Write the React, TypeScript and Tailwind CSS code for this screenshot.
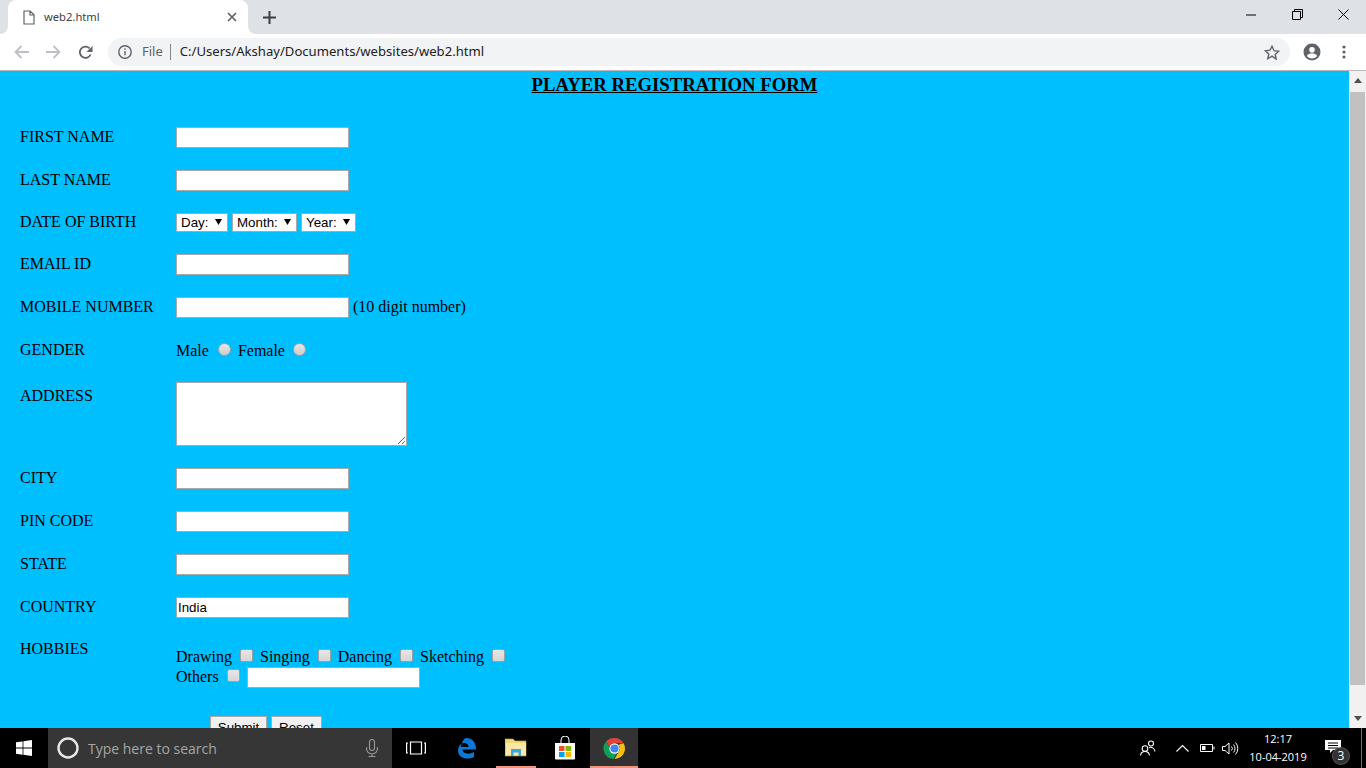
import type { ReactNode } from "react";

const fieldClass = "block h-[21px] w-[173px] border border-[#a9a9a9] bg-white px-px font-['Liberation_Sans',sans-serif] text-[13.33px] text-black outline-none";
const checkClass = "h-[13px] w-[13px] shrink-0 appearance-none rounded-[2px] border border-[#a0a0a0] bg-gradient-to-b from-[#e6e6e6] to-[#d6d6d6]";
const radioClass = "h-[13px] w-[13px] shrink-0 appearance-none rounded-full border border-[#a6a6a6] bg-gradient-to-b from-[#e8e8e8] to-[#cccccc]";
const selectClass = "block h-[19px] appearance-none border border-[#a9a9a9] bg-white pl-1 font-['Liberation_Sans',sans-serif] text-[13.33px] leading-[15px] text-black outline-none";

function Row({ label, height, labelClass = "pt-px", children }: { label: string; height: string; labelClass?: string; children: ReactNode }) {
  return (
    <div className={`flex items-start ${height}`}>
      <label className={`w-[156px] shrink-0 leading-[18px] ${labelClass}`}>{label}</label>
      {children}
    </div>
  );
}

function Arrow() {
  return (
    <svg className="pointer-events-none absolute right-[6px] top-[6px]" width="7" height="6" viewBox="0 0 7 6">
      <path d="M0 0h7L3.500 6z" fill="#000" />
    </svg>
  );
}

function TabStrip() {
  return (
    <div className="flex h-[34px] items-end bg-[#dee1e6] pl-2">
      <div className="relative flex h-[34px] w-[240px] items-center rounded-t-lg bg-white pl-[15px] pr-[11px]">
        <span className="absolute -left-2 bottom-0 h-2 w-2 bg-white"><span className="block h-2 w-2 rounded-br-lg bg-[#dee1e6]" /></span>
        <span className="absolute -right-2 bottom-0 h-2 w-2 bg-white"><span className="block h-2 w-2 rounded-bl-lg bg-[#dee1e6]" /></span>
        <svg width="12" height="15" viewBox="0 0 12 15" fill="none" stroke="#5f6368" strokeWidth="1.2">
          <path d="M1 1h6.2L11 4.8V14H1zM7 1v4h4" />
        </svg>
        <span className="ml-[9px] flex-1 text-[11.2px] text-[#3c4043]">web2.html</span>
        <svg width="10" height="10" viewBox="0 0 10 10" stroke="#5f6368" strokeWidth="1.7">
          <path d="M1 1l8 8M9 1l-8 8" />
        </svg>
      </div>
      <svg className="mb-[10px] ml-[15px]" width="13" height="13" viewBox="0 0 13 13" stroke="#3c4043" strokeWidth="2">
        <path d="M6.5 0v13M0 6.5h13" />
      </svg>
      <div className="ml-auto flex h-[34px] items-start pt-[9px] text-black">
        <div className="flex h-[11px] w-[46px] items-center justify-center">
          <svg width="10" height="2" viewBox="0 0 10 2"><path d="M0 1h10" stroke="#000" /></svg>
        </div>
        <div className="flex w-[46px] justify-center">
          <svg width="11" height="11" viewBox="0 0 11 11" fill="none" stroke="#000">
            <path d="M.5 2.500h8v8h-8zM2.500 2.500v-2h8v8h-2" />
          </svg>
        </div>
        <div className="flex w-[46px] justify-center">
          <svg width="11" height="11" viewBox="0 0 11 11" stroke="#000"><path d="M.5.5l10 10M10.500.5l-10 10" /></svg>
        </div>
      </div>
    </div>
  );
}

function Toolbar() {
  return (
    <div className="flex h-[37px] items-start border-b border-[#b7b9bc] bg-white pt-1">
      <div className="flex h-7 w-[108px] items-center pl-[14px]">
        <svg width="15" height="14" viewBox="0 0 15 14" fill="none" stroke="#bdc1c6" strokeWidth="1.8">
          <path d="M15 7H2M7.500 1L1.500 7l6 6" />
        </svg>
        <svg className="ml-[17px]" width="15" height="14" viewBox="0 0 15 14" fill="none" stroke="#bdc1c6" strokeWidth="1.8">
          <path d="M0 7h13M7.500 1l6 6-6 6" />
        </svg>
        <svg className="ml-[17px]" width="15" height="15" viewBox="0 0 15 15" fill="none">
          <path d="M12.600 9.500A5.600 5.600 0 1 1 11.500 3.400" stroke="#5f6368" strokeWidth="1.8" />
          <path d="M14.500 1v6h-6z" fill="#5f6368" />
        </svg>
      </div>
      <div className="flex h-7 w-[1182px] items-center rounded-full bg-[#f1f3f4] pl-[10px] pr-[10px]">
        <svg width="14" height="14" viewBox="0 0 14 14" fill="none" stroke="#5f6368" strokeWidth="1.4">
          <circle cx="7" cy="7" r="6.200" />
          <path d="M7 6v4.200M7 3.200v1.600" />
        </svg>
        <span className="ml-[10px] text-[13px] text-[#5f6368]">File</span>
        <span className="ml-[7px] h-4 w-px bg-[#80868b]" />
        <span className="ml-[9px] flex-1 text-[13.1px] text-[#202124]">C:/Users/Akshay/Documents/websites/web2.html</span>
        <svg width="16" height="15" viewBox="0 0 16 15" fill="none" stroke="#5f6368" strokeWidth="1.4">
          <path d="M8 1.300l2 4.400 4.700.5-3.500 3.200 1 4.700L8 11.200 3.800 13.600l1-4.700L1.300 5.700l4.700-.5z" />
        </svg>
      </div>
      <div className="flex h-7 items-center">
        <svg className="ml-[13px]" width="18" height="18" viewBox="0 0 18 18">
          <circle cx="9" cy="9" r="8.500" fill="#5f6368" />
          <circle cx="9" cy="6.800" r="2.800" fill="#fff" />
          <path d="M3.800 13c1-2 3.200-2.800 5.200-2.800s4.200.8 5.200 2.800c-1.200 1.500-3.100 2.400-5.200 2.400S5 14.500 3.800 13z" fill="#fff" />
        </svg>
        <svg className="ml-[21px]" width="4" height="14" viewBox="0 0 4 14" fill="#5f6368">
          <circle cx="2" cy="2" r="1.600" />
          <circle cx="2" cy="7" r="1.600" />
          <circle cx="2" cy="12" r="1.600" />
        </svg>
      </div>
    </div>
  );
}

function Form() {
  return (
    <main className="min-w-0 flex-1 overflow-hidden bg-[#00bfff] pl-5 font-['Liberation_Serif',serif] text-[16px] text-black">
      <h3 className="mt-[3px] h-[22px] pr-5 text-center text-[18.72px] font-bold leading-[22px] underline">PLAYER REGISTRATION FORM</h3>
      <form className="mt-[31px]">
        <Row label="FIRST NAME" height="h-[43px]"><input className={fieldClass} /></Row>
        <Row label="LAST NAME" height="h-[43px]"><input className={fieldClass} /></Row>
        <Row label="DATE OF BIRTH" height="h-[41px]" labelClass="pt-0">
          <div className="flex gap-1">
            <div className="relative">
              <select className={`${selectClass} w-[52px]`}><option>Day:</option></select>
              <Arrow />
            </div>
            <div className="relative">
              <select className={`${selectClass} w-[65px]`}><option>Month:</option></select>
              <Arrow />
            </div>
            <div className="relative">
              <select className={`${selectClass} w-[55px]`}><option>Year:</option></select>
              <Arrow />
            </div>
          </div>
        </Row>
        <Row label="EMAIL ID" height="h-[43px]"><input className={fieldClass} /></Row>
        <Row label="MOBILE NUMBER" height="h-[43px]">
          <input className={fieldClass} />
          <span className="ml-1 pt-px leading-[18px]">(10 digit number)</span>
        </Row>
        <Row label="GENDER" height="h-[42px]">
          <div className="flex items-start pt-[2px] leading-[18px]">
            <span>Male</span>
            <input type="radio" name="gender" className={`${radioClass} ml-[9px] mt-px`} />
            <span className="ml-[7px]">Female</span>
            <input type="radio" name="gender" className={`${radioClass} ml-[8px] mt-px`} />
          </div>
        </Row>
        <Row label="ADDRESS" height="h-[86px]" labelClass="pt-[5px]">
          <textarea className="block h-[64px] w-[231px] resize-y border border-[#a9a9a9] bg-white outline-none" />
        </Row>
        <Row label="CITY" height="h-[43px]"><input className={fieldClass} /></Row>
        <Row label="PIN CODE" height="h-[43px]"><input className={fieldClass} /></Row>
        <Row label="STATE" height="h-[43px]"><input className={fieldClass} /></Row>
        <Row label="COUNTRY" height="h-[42px]"><input className={fieldClass} defaultValue="India" /></Row>
        <Row label="HOBBIES" height="h-[77px]">
          <div className="pt-[8px] leading-[20px]">
            <div className="flex h-5 items-center">
              <span>Drawing</span>
              <input type="checkbox" className={`${checkClass} -mt-[3px] ml-[8px]`} />
              <span className="ml-[7px]">Singing</span>
              <input type="checkbox" className={`${checkClass} -mt-[3px] ml-[8px]`} />
              <span className="ml-[7px]">Dancing</span>
              <input type="checkbox" className={`${checkClass} -mt-[3px] ml-[8px]`} />
              <span className="ml-[7px]">Sketching</span>
              <input type="checkbox" className={`${checkClass} -mt-[3px] ml-[8px]`} />
            </div>
            <div className="flex h-5 items-center">
              <span>Others</span>
              <input type="checkbox" className={`${checkClass} -mt-[3px] ml-[8px]`} />
              <input className={`${fieldClass} ml-[7px]`} />
            </div>
          </div>
        </Row>
        <div className="flex gap-1 pl-[190px]">
          <button type="button" className="h-[24px] w-[57px] border border-[#a9a9a9] bg-[#f0f0f0] font-['Liberation_Sans',sans-serif] text-[13.33px]">Submit</button>
          <button type="button" className="h-[24px] w-[51px] border border-[#a9a9a9] bg-[#f0f0f0] font-['Liberation_Sans',sans-serif] text-[13.33px]">Reset</button>
        </div>
      </form>
    </main>
  );
}

function Scrollbar() {
  return (
    <div className="flex w-[17px] shrink-0 flex-col items-center bg-[#f1f1f1]">
      <svg className="mt-[7px]" width="8" height="5" viewBox="0 0 8 5"><path d="M4 0l4 5H0z" fill="#505050" /></svg>
      <div className="mt-[9px] h-[593px] w-[15px] bg-[#c1c1c1]" />
      <svg className="mt-[31px]" width="8" height="5" viewBox="0 0 8 5"><path d="M0 0h8L4 5z" fill="#505050" /></svg>
    </div>
  );
}

function Taskbar() {
  return (
    <footer className="flex h-10 shrink-0 items-center bg-black font-['Open_Sans',sans-serif] text-white">
      <div className="flex h-10 w-12 items-center justify-center">
        <svg width="16" height="16" viewBox="0 0 16 16" fill="#fff">
          <path d="M0 2.300l6.600-.9v6.200H0zM7.400 1.300L16 0v7.600H7.400zM0 8.400h6.600v6.300L0 13.800zM7.400 8.400H16V16l-8.600-1.200z" />
        </svg>
      </div>
      <div className="flex h-10 w-[344px] items-center bg-[#363636] pl-[9px]">
        <svg width="22" height="22" viewBox="0 0 22 22" fill="none"><circle cx="11" cy="11" r="9.500" stroke="#e8e8e8" strokeWidth="2.400" /></svg>
        <span className="ml-[9px] flex-1 text-[14px] text-[#a6a6a6]">Type here to search</span>
        <svg className="mr-[14px]" width="12" height="18" viewBox="0 0 12 18" fill="none" stroke="#9a9a9a" strokeWidth="1.100">
          <rect x="3.500" y="0.500" width="5" height="11" rx="2.500" />
          <path d="M.5 8v1.500a5.500 5.500 0 0 0 11 0V8M6 15v2.500M2.500 17.500h7" />
        </svg>
      </div>
      <div className="flex w-[48px] justify-center">
        <svg width="20" height="14" viewBox="0 0 20 14" fill="none" stroke="#fff" strokeWidth="1.200">
          <path d="M4.500 1h11v12h-11zM2 2H.6v10H2M18 2h1.400v10H18" />
        </svg>
      </div>
      <div className="flex w-[52px] justify-center">
        <svg width="20" height="21" viewBox="0 0 20 21">
          <path d="M10.500 0C16 0 20 4 20 11.500H6.500c.2 3.800 6 5.800 11.500 2.500v5c-6.500 3.400-16 1.200-16-6.500 0-3.500 1.500-5.500 4-7C5.200 7 5 8 4.800 9h7.700c0-3.500-3.300-5-6.500-3.500C6.800 2.500 8 0 10.500 0z" fill="#0a78d7" />
        </svg>
      </div>
      <div className="relative flex h-10 w-[48px] justify-center pt-[10px]">
        <svg width="22" height="19" viewBox="0 0 22 19">
          <path d="M0 1h8l2 2h11v15H0z" fill="#f6d776" stroke="#c9a74d" strokeWidth="0.600" />
          <path d="M1 5h20v12H1z" fill="#fbe8a6" />
          <path d="M6 18v-7h10v7h-2.500v-3.500h-5V18z" fill="#3ba7d8" />
        </svg>
        <span className="absolute bottom-0 left-[4px] h-[2px] w-10 bg-[#f4937c]" />
      </div>
      <div className="flex w-[50px] justify-center">
        <svg width="24" height="24" viewBox="0 0 24 24">
          <path d="M8 7V4a4 4 0 0 1 8 0v3" fill="none" stroke="#fff" strokeWidth="1" />
          <path d="M2 7h20v15.500a1 1 0 0 1-1 1H3a1 1 0 0 1-1-1z" fill="#fff" />
          <path d="M6 10h5.500v5H6z" fill="#f25022" />
          <path d="M12.500 10H18v5h-5.500z" fill="#7fba00" />
          <path d="M6 16h5.500v5H6z" fill="#00a4ef" />
          <path d="M12.500 16H18v5h-5.500z" fill="#ffb900" />
        </svg>
      </div>
      <div className="relative flex h-10 w-[48px] items-center justify-center bg-[#333]">
        <svg width="23" height="23" viewBox="0 0 24 24">
          <path d="M12 1a11 11 0 0 1 9.500 5.500H12a5.500 5.500 0 0 0-5.300 4L3.200 4.800A11 11 0 0 1 12 1z" fill="#db4437" />
          <path d="M21.500 6.500A11 11 0 0 1 12 23l4.700-8.200A5.500 5.500 0 0 0 16 8z" fill="#f4c20d" />
          <path d="M3.200 4.800l4.700 8.200a5.500 5.500 0 0 0 6.500 3.900L11 23A11 11 0 0 1 3.200 4.800z" fill="#0f9d58" />
          <circle cx="12" cy="12" r="5.400" fill="#fff" />
          <circle cx="12" cy="12" r="4.300" fill="#4285f4" />
        </svg>
        <span className="absolute bottom-0 left-0 h-[2px] w-12 bg-[#f4937c]" />
      </div>
      <div className="ml-auto flex h-10 items-center">
        <svg width="16" height="16" viewBox="0 0 16 16" fill="none" stroke="#fff" strokeWidth="1.100">
          <circle cx="5" cy="8.500" r="2.800" />
          <path d="M.5 15.500c.3-2.500 2-4 4.500-4s4.200 1.500 4.500 4" />
          <circle cx="11" cy="3.500" r="2.500" />
          <path d="M9 7.500c2.500-.8 5.500.5 6 4" />
        </svg>
        <svg className="ml-[20px]" width="13" height="7" viewBox="0 0 13 7" fill="none" stroke="#fff" strokeWidth="1.100">
          <path d="M.5 6.500l6-6 6 6" />
        </svg>
        <svg className="ml-[11px]" width="15" height="8" viewBox="0 0 15 8" fill="none" stroke="#fff">
          <path d="M.5.500h12v7H.5z" />
          <path d="M2 2h3.500v4H2z" fill="#fff" stroke="none" />
          <path d="M13.500 2.500h1v3h-1z" fill="#fff" stroke="none" />
        </svg>
        <svg className="ml-[7px]" width="17" height="13" viewBox="0 0 17 13" fill="none" stroke="#fff" strokeWidth="1">
          <path d="M.5 4.500h2.500L7 1v11L3 8.500H.5zM9.500 4.500a3 3 0 0 1 0 4M11.500 2.500a6 6 0 0 1 0 8M13.500 .5a9 9 0 0 1 0 12" />
        </svg>
        <div className="ml-[7px] flex w-[64px] flex-col items-center text-[11px] leading-[18px]">
          <span>12:17</span>
          <span>10-04-2019</span>
        </div>
        <div className="relative ml-[14px] h-10 w-[34px]">
          <svg className="absolute left-[1px] top-[12px]" width="16" height="14" viewBox="0 0 16 14">
            <path d="M0 0h16v10H8l-3 3v-3H0z" fill="#fff" />
            <path d="M3 3h10M3 5.500h10M3 8h10" stroke="#000" />
          </svg>
          <span className="absolute left-[9px] top-[20px] flex h-4 w-4 items-center justify-center rounded-full bg-[#333] text-[12px] leading-none ring-1 ring-[#555]">3</span>
        </div>
        <span className="ml-[3px] h-10 w-px bg-[#6e6e6e]" />
        <span className="w-[4px]" />
      </div>
    </footer>
  );
}

export default function App() {
  return (
    <div className="flex h-[768px] w-[1366px] flex-col overflow-hidden font-['Noto_Sans',sans-serif]">
      <TabStrip />
      <Toolbar />
      <div className="flex min-h-0 flex-1">
        <Form />
        <Scrollbar />
      </div>
      <Taskbar />
    </div>
  );
}
